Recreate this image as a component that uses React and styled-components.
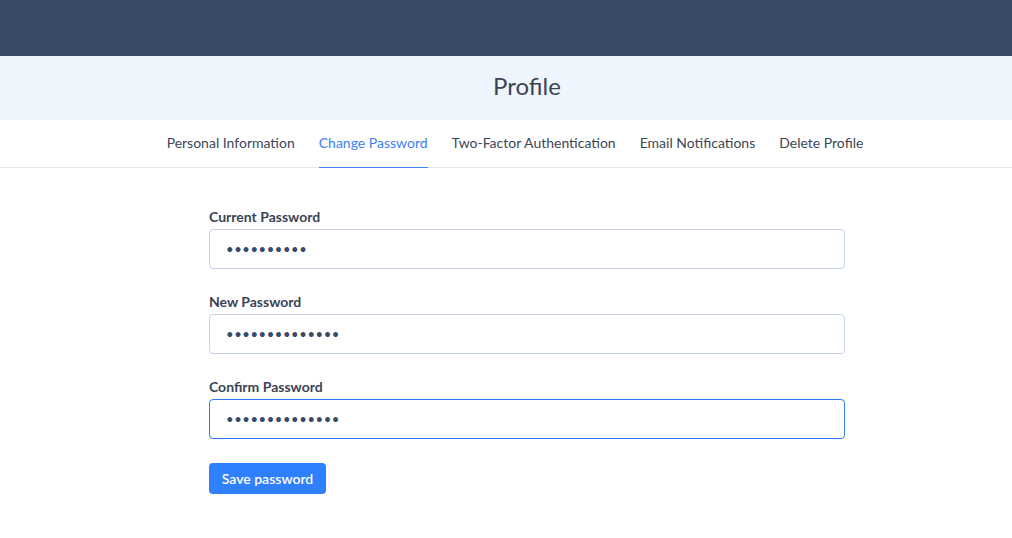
import React from 'react';
import styled, { createGlobalStyle } from 'styled-components';

const GlobalStyle = createGlobalStyle`
  body {
    margin: 0;
    background: #ffffff;
    font-family: Lato, 'Open Sans', sans-serif;
    color: #3d4556;
  }
`;

const tabs = [
  'Personal Information',
  'Change Password',
  'Two-Factor Authentication',
  'Email Notifications',
  'Delete Profile',
];

const fields = [
  { label: 'Current Password', value: 'abcdefghij' },
  { label: 'New Password', value: 'abcdefghijklmn' },
  { label: 'Confirm Password', value: 'abcdefghijklmn', focus: true },
];

const App = () => {
  return (
    <>
      <GlobalStyle />
      <TopBar />
      <TitleBar>
        <Title>Profile</Title>
      </TitleBar>
      <TabBar>
        <TabList>
          {tabs.map((t) => (
            <Tab key={t} $active={t === 'Change Password'}>{t}</Tab>
          ))}
        </TabList>
      </TabBar>
      <Main>
        <Form onSubmit={(e) => e.preventDefault()}>
          {fields.map((f) => (
            <Field key={f.label}>
              <Label>{f.label}</Label>
              <Input
                type="password"
                defaultValue={f.value}
                autoFocus={f.focus}
                $focused={f.focus}
              />
            </Field>
          ))}
          <SaveButton type="submit">Save password</SaveButton>
        </Form>
      </Main>
    </>
  );
};

export default App;

const TopBar = styled.header`
  height: 56px;
  background-color: #3a4a66;
`;
const TitleBar = styled.div`
  height: 64px;
  box-sizing: border-box;
  padding: 0 0 6px 42px;
  background-color: #eff5fd;
  display: flex;
  align-items: center;
  justify-content: center;
`;
const Title = styled.h1`
  margin: 0;
  font-size: 24px;
  font-weight: 400;
  color: #3a4455;
`;
const TabBar = styled.nav`
  height: 47px;
  border-bottom: 1px solid #e2e8f0;
  display: flex;
  justify-content: center;
  padding-left: 42px;
`;
const TabList = styled.div`
  display: flex;
  height: 100%;
`;
const Tab = styled.div`
  margin-right: 24px;
  display: flex;
  align-items: center;
  font-size: 14px;
  cursor: pointer;
  box-sizing: border-box;
  padding-bottom: 3px;
  color: ${(p) => (p.$active ? '#3b82f6' : '#3d4556')};
  border-bottom: 1px solid ${(p) => (p.$active ? '#3b82f6' : 'transparent')};
  margin-bottom: -1px;
  height: calc(100% + 1px);
`;
const Main = styled.main`
  display: flex;
  justify-content: center;
  padding: 40px 0 0 42px;
`;
const Form = styled.form`
  width: 636px;
  display: flex;
  flex-direction: column;
`;
const Field = styled.div`
  display: flex;
  flex-direction: column;
  margin-bottom: 24px;
`;
const Label = styled.label`
  font-size: 14px;
  font-weight: 700;
  line-height: 18px;
  color: #3a4455;
  margin-bottom: 3px;
`;
const Input = styled.input`
  box-sizing: border-box;
  height: 40px;
  width: 100%;
  padding: 0 16px;
  border: 1px solid ${(p) => (p.$focused ? '#2f7cf6' : '#c5d2ea')};
  border-radius: 4px;
  font-family: Lato, 'Open Sans', sans-serif;
  font-size: 13px;
  letter-spacing: 0.6px;
  color: #3a4a66;
  outline: none;
  caret-color: #1f2937;

  &:focus {
    border-color: #2f7cf6;
  }
`;
const SaveButton = styled.button`
  align-self: flex-start;
  height: 31px;
  width: 117px;
  border: none;
  border-radius: 4px;
  background-color: #2f80ff;
  color: #ffffff;
  font-family: Lato, 'Open Sans', sans-serif;
  font-size: 14px;
  font-weight: 600;
  cursor: pointer;
`;
